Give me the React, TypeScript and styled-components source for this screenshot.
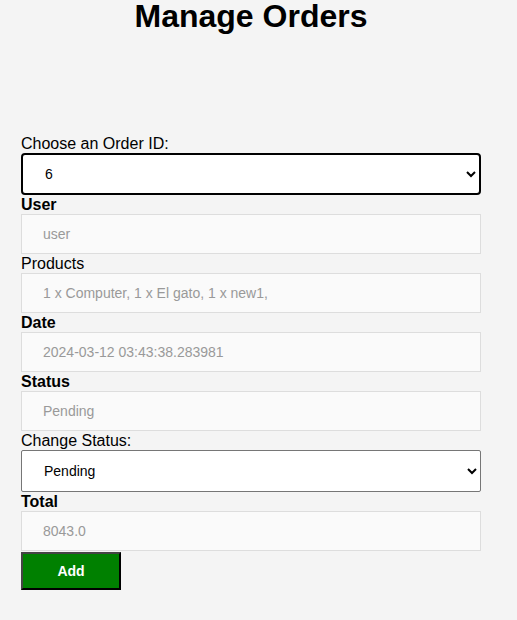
import styled, { createGlobalStyle } from "styled-components";

const GlobalStyle = createGlobalStyle`
  body {
    margin: 0;
    background-color: #f4f4f4;
    font-family: "Liberation Sans", Arial, sans-serif;
  }
`;

const Page = styled.div`
  width: 460px;
  margin-left: 21px;
  padding-bottom: 30px;
`;

const Title = styled.h1`
  margin: 0 0 102px 0;
  font-size: 32px;
  line-height: 32px;
  font-weight: bold;
  text-align: center;
  color: #000;
`;

const Form = styled.form`
  display: flex;
  flex-direction: column;
`;

const Label = styled.label<{ $bold?: boolean }>`
  display: block;
  font-size: 16px;
  line-height: 19px;
  color: #000;
  font-weight: ${(p) => (p.$bold ? "bold" : "normal")};
`;

const Field = styled.input`
  box-sizing: border-box;
  width: 100%;
  height: 40px;
  margin: 0;
  padding: 0 21px;
  font-family: "Liberation Sans", Arial, sans-serif;
  font-size: 14px;
  color: #999;
  background-color: #fafafa;
  border: 1px solid #ddd;
  outline: none;
`;

const Select = styled.select<{ $active?: boolean }>`
  box-sizing: border-box;
  width: 100%;
  height: 42px;
  margin: 0;
  padding: 0 18px;
  font-family: "Liberation Sans", Arial, sans-serif;
  font-size: 14px;
  color: #000;
  background-color: #fff;
  border: ${(p) => (p.$active ? "2px solid #000" : "1px solid #767676")};
  border-radius: ${(p) => (p.$active ? "4px" : "2px")};
  outline: none;
`;

const Button = styled.button`
  box-sizing: border-box;
  width: 100px;
  height: 38px;
  margin-top: 1px;
  font-family: "Liberation Sans", Arial, sans-serif;
  font-size: 14px;
  font-weight: bold;
  color: #fff;
  background-color: #008000;
  border-style: solid;
  border-width: 2px;
  border-color: #444 #000 #000 #444;
  cursor: pointer;
`;

const App: React.FC = () => {
  return (
    <Page>
      <GlobalStyle />
      <Title>Manage Orders</Title>
      <Form onSubmit={(e) => e.preventDefault()}>
        <Label>Choose an Order ID:</Label>
        <Select $active defaultValue="6">
          <option value="6">6</option>
        </Select>

        <Label $bold>User</Label>
        <Field readOnly value="user" />

        <Label>Products</Label>
        <Field readOnly value="1 x Computer, 1 x El gato, 1 x new1," />

        <Label $bold>Date</Label>
        <Field readOnly value="2024-03-12 03:43:38.283981" />

        <Label $bold>Status</Label>
        <Field readOnly value="Pending" />

        <Label>Change Status:</Label>
        <Select defaultValue="Pending">
          <option value="Pending">Pending</option>
          <option value="Shipped">Shipped</option>
          <option value="Delivered">Delivered</option>
        </Select>

        <Label $bold>Total</Label>
        <Field readOnly value="8043.0" />

        <div>
          <Button type="submit">Add</Button>
        </div>
      </Form>
    </Page>
  );
};

export default App;
